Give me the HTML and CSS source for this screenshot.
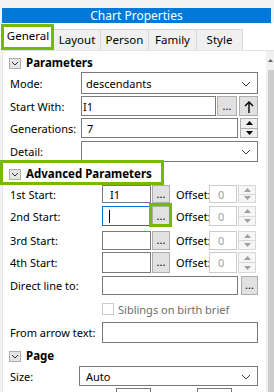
FILE: index.html
```html
<!DOCTYPE html>
<html>
<head>
<meta charset="utf-8">
<link rel="stylesheet" href="styles.css">
</head>
<body>
<div class="window">
  <div class="titlebar">Chart Properties</div>
  <div class="tabs">
    <div class="tab active">General<span class="hl hl-tab"></span></div>
    <div class="tab w47">Layout</div>
    <div class="tab w48">Person</div>
    <div class="tab w48">Family</div>
    <div class="tab w46">Style</div>
  </div>
  <div class="panel">
    <div class="content">
      <div class="sec s-params">
        <span class="toggle"><svg width="8" height="5" viewBox="0 0 8 5"><polyline points="1,1 4,4 7,1" fill="none" stroke="#333" stroke-width="1"/></svg></span>
        <span>Parameters</span>
      </div>
      <div class="row params r-mode">
        <span class="lbl">Mode:</span>
        <div class="field select"><span class="val v-desc">descendants</span><svg class="chev" width="10" height="6" viewBox="0 0 10 6"><polyline points="1,1 5,5 9,1" fill="none" stroke="#444" stroke-width="1"/></svg></div>
      </div>
      <div class="row params r-start">
        <span class="lbl">Start With:</span>
        <div class="field grow"><span class="val v-i1">I1</span></div>
        <div class="btn dots b-start">...</div>
        <div class="btn up"><svg width="10" height="13" viewBox="0 0 10 13"><line x1="5" y1="2" x2="5" y2="13" stroke="#000" stroke-width="1.4"/><polyline points="1,6 5,2 9,6" fill="none" stroke="#000" stroke-width="1.4"/></svg></div>
      </div>
      <div class="row params r-gen">
        <span class="lbl">Generations:</span>
        <div class="field grow"><span class="val v-seven">7</span></div>
        <div class="spin">
          <span class="half"><svg width="7" height="4" viewBox="0 0 7 4"><polygon points="0,4 3.5,0 7,4" fill="#000"/></svg></span>
          <span class="half"><svg width="7" height="4" viewBox="0 0 7 4"><polygon points="0,0 3.5,4 7,0" fill="#000"/></svg></span>
        </div>
      </div>
      <div class="row params r-detail">
        <span class="lbl">Detail:</span>
        <div class="field select"><span class="val"></span><svg class="chev" width="10" height="6" viewBox="0 0 10 6"><polyline points="1,1 5,5 9,1" fill="none" stroke="#444" stroke-width="1"/></svg></div>
      </div>

      <div class="sec s-adv">
        <span class="toggle"><svg width="8" height="5" viewBox="0 0 8 5"><polyline points="1,1 4,4 7,1" fill="none" stroke="#333" stroke-width="1"/></svg></span>
        <span>Advanced Parameters</span>
        <span class="hl hl-adv"></span>
      </div>
      <div class="row adv r-1">
        <span class="lbl">1st Start:</span>
        <div class="field short"><span class="val v-a1">I1</span></div>
        <div class="btn dots sm">...</div>
        <span class="off">Offset:</span>
        <div class="field num"><span class="val">0</span></div>
        <div class="spin dis">
          <span class="half"><svg width="7" height="4" viewBox="0 0 7 4"><polygon points="0,4 3.5,0 7,4" fill="#a0a0a0"/></svg></span>
          <span class="half"><svg width="7" height="4" viewBox="0 0 7 4"><polygon points="0,0 3.5,4 7,0" fill="#a0a0a0"/></svg></span>
        </div>
      </div>
      <div class="row adv r-2">
        <span class="lbl">2nd Start:</span>
        <div class="field short focus"><span class="caret"></span></div>
        <div class="btn dots sm hlwrap">...<span class="hl hl-btn"></span></div>
        <span class="off">Offset:</span>
        <div class="field num"><span class="val">0</span></div>
        <div class="spin dis">
          <span class="half"><svg width="7" height="4" viewBox="0 0 7 4"><polygon points="0,4 3.5,0 7,4" fill="#a0a0a0"/></svg></span>
          <span class="half"><svg width="7" height="4" viewBox="0 0 7 4"><polygon points="0,0 3.5,4 7,0" fill="#a0a0a0"/></svg></span>
        </div>
      </div>
      <div class="row adv r-3">
        <span class="lbl">3rd Start:</span>
        <div class="field short"></div>
        <div class="btn dots sm">...</div>
        <span class="off">Offset:</span>
        <div class="field num"><span class="val">0</span></div>
        <div class="spin dis">
          <span class="half"><svg width="7" height="4" viewBox="0 0 7 4"><polygon points="0,4 3.5,0 7,4" fill="#a0a0a0"/></svg></span>
          <span class="half"><svg width="7" height="4" viewBox="0 0 7 4"><polygon points="0,0 3.5,4 7,0" fill="#a0a0a0"/></svg></span>
        </div>
      </div>
      <div class="row adv r-4">
        <span class="lbl">4th Start:</span>
        <div class="field short"></div>
        <div class="btn dots sm">...</div>
        <span class="off">Offset:</span>
        <div class="field num"><span class="val">0</span></div>
        <div class="spin dis">
          <span class="half"><svg width="7" height="4" viewBox="0 0 7 4"><polygon points="0,4 3.5,0 7,4" fill="#a0a0a0"/></svg></span>
          <span class="half"><svg width="7" height="4" viewBox="0 0 7 4"><polygon points="0,0 3.5,4 7,0" fill="#a0a0a0"/></svg></span>
        </div>
      </div>
      <div class="row adv r-direct">
        <span class="lbl">Direct line to:</span>
        <div class="field grow"></div>
        <div class="btn dots b-direct">...</div>
      </div>
      <div class="row adv r-sib">
        <span class="lbl"></span>
        <span class="check"></span>
        <span class="sib">Siblings on birth brief</span>
      </div>
      <div class="row adv r-arrow">
        <span class="lbl">From arrow text:</span>
        <div class="field grow"></div>
      </div>

      <div class="sec s-page">
        <span class="toggle"><svg width="8" height="5" viewBox="0 0 8 5"><polyline points="1,1 4,4 7,1" fill="none" stroke="#333" stroke-width="1"/></svg></span>
        <span>Page</span>
      </div>
      <div class="row page r-size">
        <span class="lbl">Size:</span>
        <div class="field select"><span class="val v-auto">Auto</span><svg class="chev" width="10" height="6" viewBox="0 0 10 6"><polyline points="1,1 5,5 9,1" fill="none" stroke="#444" stroke-width="1"/></svg></div>
      </div>
      <div class="row page r-next">
        <span class="field stub s1"></span>
        <span class="field stub s2"></span>
      </div>
    </div>
    <div class="scrollbar">
      <div class="sb-arrow"><svg width="5" height="3" viewBox="0 0 5 3"><polygon points="0,3 2.5,0 5,3" fill="#606060"/></svg></div>
      <div class="sb-thumb"></div>
    </div>
  </div>
</div>
</body>
</html>
```

FILE: styles.css
```css
* { box-sizing: border-box; }

body {
  margin: 0;
  background: #f4f4f4;
  font-family: "Noto Sans", "Open Sans", sans-serif;
  font-size: 11px;
  color: #000;
  overflow: hidden;
  white-space: nowrap;
}

.window {
  position: relative;
  width: 274px;
  height: 392px;
  padding-top: 8px;
  overflow: hidden;
}

.titlebar {
  height: 15px;
  margin: 0 3px 0 2px;
  background: #0078d7;
  color: #fff;
  text-align: center;
  font-size: 12px;
  line-height: 15px;
}

.tabs {
  display: flex;
  align-items: flex-end;
  height: 27px;
  padding-left: 2px;
  background: #fff;
  font-size: 11.5px;
}

.tab {
  height: 21px;
  display: flex;
  align-items: center;
  justify-content: center;
  background: #f0f0f0;
  border: 1px solid #d9d9d9;
  border-left: none;
  border-bottom: none;
  line-height: 1;
}
.tab.active {
  position: relative;
  width: 52px;
  height: 26px;
  background: #fff;
  border: none;
  padding-bottom: 2px;
}
.w46 { width: 46px; }
.w47 { width: 47px; }
.w48 { width: 48px; }

.hl {
  position: absolute;
  border: 3px solid #76b900;
  pointer-events: none;
}
.hl-tab { left: -1px; right: 0; top: 0; bottom: 0; }
.hl-adv { left: -10px; width: 164px; top: -7px; bottom: -4px; }
.hl-btn { left: -4px; right: -3px; top: -4px; bottom: -2px; }

.panel {
  display: flex;
  height: 342px;
  margin-left: 2px;
  background: #fff;
  border-top: 1px solid #e3e3e3;
  border-left: 1px solid #e3e3e3;
}

.content {
  flex: 1;
  padding: 0 8px 0 7px;
  line-height: 1;
}

.scrollbar {
  width: 8px;
  background: #f0f0f0;
  display: flex;
  flex-direction: column;
}
.sb-arrow {
  height: 19px;
  display: flex;
  align-items: center;
  justify-content: flex-end;
  padding-right: 1px;
}
.sb-thumb {
  flex: 1;
  margin-left: 2px;
  background: #cdcdcd;
}

.sec {
  position: relative;
  display: flex;
  align-items: center;
  height: 14px;
  font-weight: bold;
  font-size: 11.5px;
}
.toggle {
  width: 12px;
  height: 11px;
  margin-left: -1px;
  margin-right: 5px;
  border: 1px solid #adadad;
  background: #e5e5e5;
  display: flex;
  align-items: center;
  justify-content: center;
}

.row {
  display: flex;
  align-items: center;
}
.lbl { flex: none; }
.params .lbl { width: 71px; }
.adv .lbl { width: 92px; }
.page .lbl { width: 69px; }

.field {
  height: 100%;
  background: #fff;
  border: 1px solid #7a7a7a;
  display: flex;
  align-items: center;
}
.grow { flex: 1; }
.select {
  flex: 1;
  justify-content: space-between;
  padding: 0 6px 0 4px;
}
.chev { margin-top: 1px; }
.val { padding-left: 0; }
.v-i1 { padding-left: 1px; }
.v-seven { padding-left: 5px; }
.v-a1 { padding-left: 7px; }

.btn {
  height: 100%;
  display: flex;
  align-items: center;
  justify-content: center;
  background: #e1e1e1;
  border: 1px solid #adadad;
}
.dots { padding-bottom: 2px; }
.b-start { width: 20px; margin-left: 1px; }
.up { width: 19px; margin-left: 2px; }
.sm { width: 18px; margin-left: 1px; }
.b-direct { width: 17px; margin-left: 3px; }
.hlwrap { position: relative; }

.spin {
  width: 18px;
  height: 100%;
  margin-left: 2px;
  border: 1px solid #adadad;
  background: #efefef;
  display: flex;
  flex-direction: column;
}
.half {
  flex: 1;
  display: flex;
  align-items: center;
  justify-content: center;
}
.half + .half { border-top: 1px solid #adadad; }
.spin.dis { margin-left: 1px; border-color: #d9d9d9; background: #f6f6f6; }
.spin.dis .half + .half { border-top-color: #d9d9d9; }

.short { width: 49px; }
.focus { border-color: #0078d7; padding-left: 6px; }
.caret { width: 1px; height: 13px; background: #000; }
.off { margin-left: 6px; width: 33px; }
.num {
  width: 28px;
  border-color: #cccccc;
  color: #a0a0a0;
  padding-left: 8px;
}

.check {
  width: 12px;
  height: 12px;
  border: 1px solid #cccccc;
  background: #fff;
}
.sib { margin-left: 4px; color: #6d6d6d; }

.s-params { margin-top: 5px; }
.r-mode { margin-top: 2px; height: 22px; }
.r-start { margin-top: 2px; height: 20px; }
.r-gen { margin-top: 2px; height: 20px; }
.r-detail { margin-top: 3px; height: 21px; }
.s-adv { margin-top: 5px; }
.r-1 { margin-top: 4px; height: 18px; }
.r-2 { margin-top: 3px; height: 20px; }
.r-3 { margin-top: 5px; height: 19px; }
.r-4 { margin-top: 2px; height: 21px; }
.r-direct { margin-top: 3px; height: 19px; }
.r-sib { margin-top: 8px; height: 12px; }
.r-arrow { margin-top: 7px; height: 21px; }
.s-page { margin-top: 6px; }
.r-size { margin-top: 3px; height: 20px; }
.r-next { margin-top: 2px; height: 20px; }
.stub { width: 35px; }
.s1 { margin-left: 106px; }
.s2 { margin-left: 46px; }
.v-auto { padding-left: 2px; }
```
